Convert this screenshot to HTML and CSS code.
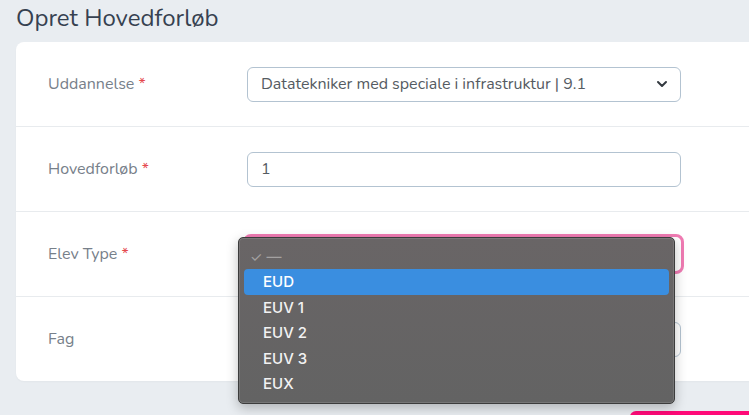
FILE: index.html
```html
<!DOCTYPE html>
<html lang="da">
<head>
<meta charset="utf-8">
<title>Opret Hovedforløb</title>
<link rel="stylesheet" href="styles.css">
</head>
<body>
<div class="page">
  <h1 class="title">Opret Hovedforløb</h1>
  <div class="card">
    <div class="row">
      <div class="label">Uddannelse <span class="req">*</span></div>
      <div class="control select">
        <span class="value">Datatekniker med speciale i infrastruktur | 9.1</span>
        <svg class="chev" width="12" height="8" viewBox="0 0 12 8"><path d="M2 2 L6 6 L10 2" fill="none" stroke="#343a40" stroke-width="2" stroke-linecap="round" stroke-linejoin="round"/></svg>
      </div>
    </div>
    <div class="row">
      <div class="label">Hovedforløb <span class="req">*</span></div>
      <div class="control"><span class="value">1</span></div>
    </div>
    <div class="row">
      <div class="label">Elev Type <span class="req">*</span></div>
      <div class="control focus"></div>
    </div>
    <div class="row last">
      <div class="label">Fag</div>
      <div class="control"></div>
    </div>
    <div class="popup">
      <div class="opt placeholder"><span class="check">✓</span> —</div>
      <div class="opt active">EUD</div>
      <div class="opt">EUV 1</div>
      <div class="opt">EUV 2</div>
      <div class="opt">EUV 3</div>
      <div class="opt">EUX</div>
    </div>
  </div>
  <div class="footer"><div class="btn"></div></div>
</div>
</body>
</html>
```
FILE: styles.css
```css
html, body {
  margin: 0;
  padding: 0;
  background: #e9edf1;
  overflow: hidden;
  height: 415px;
}
.page {
  width: 780px;
  font-family: "Nunito", "Open Sans", "Lato", sans-serif;
}
.title {
  margin: 0;
  padding: 2px 0 0 16px;
  height: 42px;
  box-sizing: border-box;
  font-size: 24px;
  font-weight: 400;
  color: #364150;
  line-height: 32px;
}
.card {
  position: relative;
  margin-left: 16px;
  background: #fff;
  border-radius: 8px;
  box-shadow: 0 1px 2px rgba(0,0,0,0.03);
}
.row {
  display: flex;
  align-items: center;
  height: 84px;
  border-bottom: 1px solid #e8ebee;
  box-sizing: content-box;
}
.row.last { border-bottom: none; }
.label {
  width: 231px;
  padding-left: 32px;
  box-sizing: border-box;
  font-size: 16px;
  color: #77808a;
}
.req { color: #e5484d; }
.control {
  width: 434px;
  height: 35px;
  box-sizing: border-box;
  border: 1px solid #b3c3d1;
  border-radius: 6px;
  display: flex;
  align-items: center;
  padding-left: 13px;
  padding-right: 12px;
  font-size: 16px;
  color: #555b62;
}
.control .value { flex: 1; }
.chev { display: block; }
.control.focus {
  height: 40px;
  width: 441px;
  margin-left: -4px;
  border: 3px solid #f07bb3;
  border-radius: 8px;
}
.popup {
  position: absolute;
  left: 222px;
  top: 195px;
  width: 437px;
  height: 167px;
  box-sizing: border-box;
  background: linear-gradient(#696566, #636363);
  border: 1px solid #3c3c3c;
  box-shadow: inset 0 0 0 1px rgba(255,255,255,0.12), 0 4px 12px rgba(0,0,0,0.25);
  border-radius: 5px;
  padding: 6px 5px;
  font-family: "Inter", "Liberation Sans", sans-serif;
  font-size: 15px;
  font-weight: 500;
  color: #f2f2f2;
}
.opt {
  height: 25.5px;
  line-height: 25.5px;
  padding-left: 19px;
  border-radius: 4px;
}
.opt.placeholder {
  height: 25px;
  line-height: 25px;
  padding-left: 6px;
  color: #a3a1a1;
  font-weight: 400;
}
.check { font-size: 14px; }
.opt.active { background: #3a8ee0; color: #fff; }
.footer {
  display: flex;
  padding-top: 30px;
  padding-left: 630px;
}
.btn {
  width: 150px;
  height: 20px;
  background: #ff0a78;
  border-radius: 6px 0 0 0;
}
```
